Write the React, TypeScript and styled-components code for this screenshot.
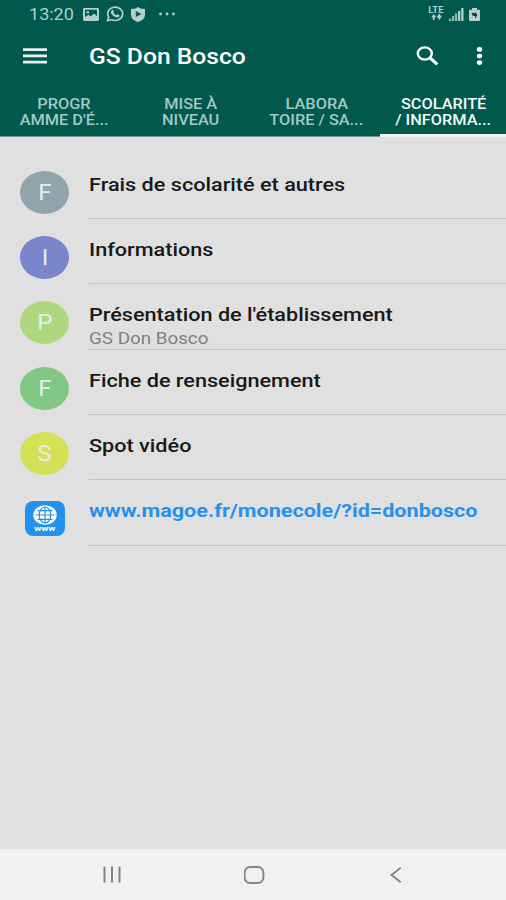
import React from "react";
import styled, { createGlobalStyle } from "styled-components";

const GlobalStyle = createGlobalStyle`
  * { box-sizing: border-box; }
  body { margin: 0; background: #e0e0e0; font-family: Roboto, "Liberation Sans", sans-serif; }
  svg { display: block; flex: none; }
`;

const Screen = styled.main`
  width: 506px;
  height: 900px;
  display: flex;
  flex-direction: column;
  overflow: hidden;
  background: #e0e0e0;
`;

const Header = styled.header`
  height: 137px;
  flex: none;
  display: flex;
  flex-direction: column;
  background: #00594c;
`;

const StatusBar = styled.div`
  height: 28px;
  padding: 0 26px 0 29px;
  display: flex;
  align-items: center;
  color: #b3d0cb;
`;

const Stretch = styled.span<{ $x: number; $origin?: string }>`
  display: inline-block;
  white-space: nowrap;
  transform: scaleX(${(p) => p.$x});
  transform-origin: ${(p) => p.$origin ?? "left"} center;
`;

const Clock = styled.div`
  width: 54px;
  font-size: 17px;
  line-height: 28px;
`;

const StatusIcons = styled.div`
  flex: 1;
  display: flex;
  align-items: center;
  gap: 7px;
`;

const SignalIcons = styled.div`
  display: flex;
  align-items: center;
  gap: 5px;
`;

const Toolbar = styled.div`
  height: 56px;
  padding: 0 23px;
  display: flex;
  align-items: center;
  color: #fff;
`;

const Title = styled.h1`
  flex: 1;
  margin: 0 0 0 42px;
  padding-top: 2px;
  font-size: 22px;
  font-weight: 500;
  line-height: 54px;
`;

const Actions = styled.div`
  display: flex;
  align-items: center;
  gap: 37px;
`;

const Tabs = styled.nav`
  flex: 1;
  display: grid;
  grid-template-columns: repeat(4, 126.5px);
`;

const Tab = styled.div<{ $active?: boolean }>`
  display: flex;
  flex-direction: column;
  align-items: center;
  padding: 11.500px 0 0 1px;
  border-bottom: ${(p) => (p.$active ? "3px solid #eef2f1" : "1px solid #6f9c94")};
  color: ${(p) => (p.$active ? "#f4faf8" : "#a3c9c2")};
  font-size: 14px;
  font-weight: 500;
  line-height: 16.500px;
`;

const List = styled.ul`
  flex: 1;
  margin: 0;
  padding: 16.700px 0 0;
  list-style: none;
`;

const Row = styled.li`
  height: 65.33px;
  display: flex;
  padding-left: 20px;
`;

const Leading = styled.div`
  width: 49px;
  padding-top: 17px;
  display: flex;
  justify-content: center;
  align-items: flex-start;
`;

const Avatar = styled.div<{ $color: string }>`
  width: 49px;
  height: 43px;
  border-radius: 50%;
  display: flex;
  align-items: center;
  justify-content: center;
  background: ${(p) => p.$color};
  color: #e8eceb;
  font-size: 21.500px;
  line-height: 43px;
`;

const Content = styled.div`
  flex: 1;
  margin-left: 20px;
  padding-top: 20.100px;
  border-bottom: 1px solid #c5c5c5;
`;

const Name = styled.div<{ $link?: boolean }>`
  font-size: 18px;
  line-height: 22px;
  font-weight: ${(p) => (p.$link ? 700 : 500)};
  color: ${(p) => (p.$link ? "#2492ea" : "#181818")};
`;

const Detail = styled.div`
  margin-top: 3px;
  font-size: 16px;
  line-height: 19px;
  color: #808080;
`;

const NavBar = styled.footer`
  height: 51px;
  flex: none;
  padding: 0 100px 0 102px;
  display: flex;
  align-items: center;
  justify-content: space-between;
  background: #f1f1f1;
`;

const PictureIcon = () => (
  <svg width="16" height="13" viewBox="0 0 16 14" preserveAspectRatio="none">
    <path fill="currentColor" fillRule="evenodd" d="M1.500 0h13A1.500 1.500 0 0 1 16 1.500v11A1.500 1.500 0 0 1 14.500 14h-13A1.500 1.500 0 0 1 0 12.500v-11A1.500 1.500 0 0 1 1.500 0zM2 2v9.500h12V2z" />
    <path fill="currentColor" d="M2 12V9.800l3.500-2.500 2.200 1.800L11 5.800l3 3V12z" />
    <circle cx="4.800" cy="4.500" r="1.300" fill="currentColor" />
  </svg>
);

const ChatIcon = () => (
  <svg width="18" height="16" viewBox="0 0 24 24" preserveAspectRatio="none">
    <path fill="none" stroke="currentColor" strokeWidth="2.300" d="M2 22l1.600-5.300A10 10 0 1 1 7.500 20.500z" />
    <path fill="currentColor" d="M8.200 6.200c.5-.4 1.200-.3 1.500.3l.9 2c.2.500 0 .9-.8 1.700.9 1.700 2.200 2.900 4 3.600.8-1.100 1.200-1.400 1.700-1.200l2.100 1c.5.3.4 1.300 0 2-1 1.600-3 1.900-5.300.9-2.500-1.100-4.500-3.200-5.500-5.500-.8-1.800-.2-3.800 1.400-4.800z" />
  </svg>
);

const ShieldIcon = () => (
  <svg width="14" height="15" viewBox="0 0 14 15">
    <path fill="currentColor" d="M7 0l2.500 1.500L14 2v5.500c0 3.800-2.800 6.300-7 7.500-4.200-1.200-7-3.700-7-7.500V2l4.500-.5z" />
    <path fill="#0b5b50" d="M4.800 4l5.800 3-5.800 3z" />
  </svg>
);

const MoreDots = () => (
  <svg width="18" height="4" viewBox="0 0 18 4" fill="currentColor">
    <circle cx="2.500" cy="2" r="1.400" />
    <circle cx="9" cy="2" r="1.400" />
    <circle cx="15.500" cy="2" r="1.400" />
  </svg>
);

const DotsSlot = styled.div`
  margin: -1px 0 0 6px;
`;

const LteStack = styled.div`
  display: flex;
  flex-direction: column;
  align-items: center;
  width: 16px;
  margin-top: -2px;
  font-size: 8.500px;
  line-height: 8px;
  font-weight: 700;
`;

const LteIcon = () => (
  <LteStack>
    <Stretch $x={1.1} $origin="center">LTE</Stretch>
    <svg width="11" height="6" viewBox="0 0 11 6" fill="currentColor">
      <path d="M2.700 0L5.200 3.300H3.600V6H1.800V3.300H.2zM8.300 6L5.500 1.800h1.900V0h1.800v1.800h1.800z" />
    </svg>
  </LteStack>
);

const BarsIcon = () => (
  <svg width="15" height="13" viewBox="0 0 15 13" fill="currentColor">
    <path d="M0 10.500h2.200V13H0zM3 8h2.200v5H3zM6 5.500h2.200V13H6z" opacity=".8" />
    <path d="M9 3h2.300v10H9zM12.200 0h2.300v13h-2.300z" />
  </svg>
);

const BatteryIcon = () => (
  <svg width="11" height="13" viewBox="0 0 11 14" preserveAspectRatio="none">
    <path fill="currentColor" d="M3 0h5v2h2a1 1 0 0 1 1 1v10a1 1 0 0 1-1 1H1a1 1 0 0 1-1-1V3a1 1 0 0 1 1-1h2z" />
    <path fill="#123f39" d="M2.800 4.800l2.700 1L6 4.300 8.400 7.500 6 11.500l.2-2.500L3.300 8z" />
  </svg>
);

const MenuIcon = () => (
  <svg width="24" height="16" viewBox="0 0 24 16" fill="#e9f1ef">
    <path d="M0 .3h24v2.700H0zM0 6.500h24v2.700H0zM0 12.800h24v2.700H0z" />
  </svg>
);

const SearchIcon = () => (
  <svg width="23" height="20" viewBox="0 0 23 20" fill="none" stroke="currentColor">
    <ellipse cx="8.800" cy="7.500" rx="7" ry="6.100" strokeWidth="2.400" />
    <path d="M13.800 11.800l7.500 6.600" strokeWidth="3.200" />
  </svg>
);

const OverflowIcon = () => (
  <svg width="7" height="18" viewBox="0 0 7 18" fill="currentColor">
    <ellipse cx="3.500" cy="2.400" rx="2.700" ry="2.300" />
    <ellipse cx="3.500" cy="9" rx="2.700" ry="2.300" />
    <ellipse cx="3.500" cy="15.600" rx="2.700" ry="2.300" />
  </svg>
);

const WebBadge = styled.div`
  width: 40px;
  height: 35px;
  margin: 3.200px 0 0 1px;
  padding-top: 4px;
  border-radius: 8px;
  display: flex;
  flex-direction: column;
  align-items: center;
  background: #2492ea;
  color: #fff;
  font-size: 8px;
  line-height: 7px;
  font-weight: 700;
`;

const GlobeIcon = () => (
  <svg width="24" height="20" viewBox="0 0 24 20">
    <ellipse cx="12" cy="10" rx="11.700" ry="9.800" fill="#fff" />
    <g fill="none" stroke="#2492ea" strokeWidth="1.200">
      <path d="M12 2v16M2.500 10h19M4.500 5.700h15M4.500 14.300h15" />
      <ellipse cx="12" cy="10" rx="5.800" ry="8" />
    </g>
  </svg>
);

const RecentsIcon = () => (
  <svg width="20" height="17" viewBox="0 0 20 17" stroke="#858585" strokeWidth="2">
    <path d="M2.500 .5v16M10 .5v16M17.500 .5v16" />
  </svg>
);

const HomeIcon = () => (
  <svg width="21" height="18" viewBox="0 0 21 18">
    <rect x=".6" y="1" width="18.800" height="16" rx="5.500" fill="none" stroke="#858585" strokeWidth="1.900" />
  </svg>
);

const BackIcon = () => (
  <svg width="20" height="16" viewBox="-4 0 20 16" fill="none" stroke="#858585" strokeWidth="1.900">
    <path d="M10.700 .8L1.500 8l9.200 7.200" />
  </svg>
);

const tabs = [
  { lines: ["PROGR", "AMME D'É..."] },
  { lines: ["MISE À", "NIVEAU"] },
  { lines: ["LABORA", "TOIRE / SA..."] },
  { lines: ["SCOLARITÉ", "/ INFORMA..."], active: true },
];

const entries = [
  { letter: "F", color: "#90a4ab", name: "Frais de scolarité et autres" },
  { letter: "I", color: "#7986cb", name: "Informations" },
  { letter: "P", color: "#aed880", name: "Présentation de l'établissement", detail: "GS Don Bosco" },
  { letter: "F", color: "#80c883", name: "Fiche de renseignement" },
  { letter: "S", color: "#d4e157", name: "Spot vidéo" },
];

export default function App() {
  return (
    <Screen>
      <GlobalStyle />
      <Header>
        <StatusBar>
          <Clock><Stretch $x={1.06}>13:20</Stretch></Clock>
          <StatusIcons>
            <PictureIcon />
            <ChatIcon />
            <ShieldIcon />
            <DotsSlot><MoreDots /></DotsSlot>
          </StatusIcons>
          <SignalIcons>
            <LteIcon />
            <BarsIcon />
            <BatteryIcon />
          </SignalIcons>
        </StatusBar>
        <Toolbar>
          <MenuIcon />
          <Title><Stretch $x={1.12}>GS Don Bosco</Stretch></Title>
          <Actions>
            <SearchIcon />
            <OverflowIcon />
          </Actions>
        </Toolbar>
        <Tabs>
          {tabs.map((tab) => (
            <Tab key={tab.lines[0]} $active={tab.active}>
              {tab.lines.map((line) => (
                <Stretch key={line} $x={1.165} $origin="center">{line}</Stretch>
              ))}
            </Tab>
          ))}
        </Tabs>
      </Header>
      <List>
        {entries.map((entry) => (
          <Row key={entry.name}>
            <Leading>
              <Avatar $color={entry.color}>
                <Stretch $x={1.12} $origin="center">{entry.letter}</Stretch>
              </Avatar>
            </Leading>
            <Content>
              <Name><Stretch $x={1.202}>{entry.name}</Stretch></Name>
              {entry.detail && <Detail><Stretch $x={1.175}>{entry.detail}</Stretch></Detail>}
            </Content>
          </Row>
        ))}
        <Row>
          <Leading>
            <WebBadge>
              <GlobeIcon />
              <Stretch $x={1.2} $origin="center">www</Stretch>
            </WebBadge>
          </Leading>
          <Content>
            <Name $link><Stretch $x={1.199}>www.magoe.fr/monecole/?id=donbosco</Stretch></Name>
          </Content>
        </Row>
      </List>
      <NavBar>
        <RecentsIcon />
        <HomeIcon />
        <BackIcon />
      </NavBar>
    </Screen>
  );
}
